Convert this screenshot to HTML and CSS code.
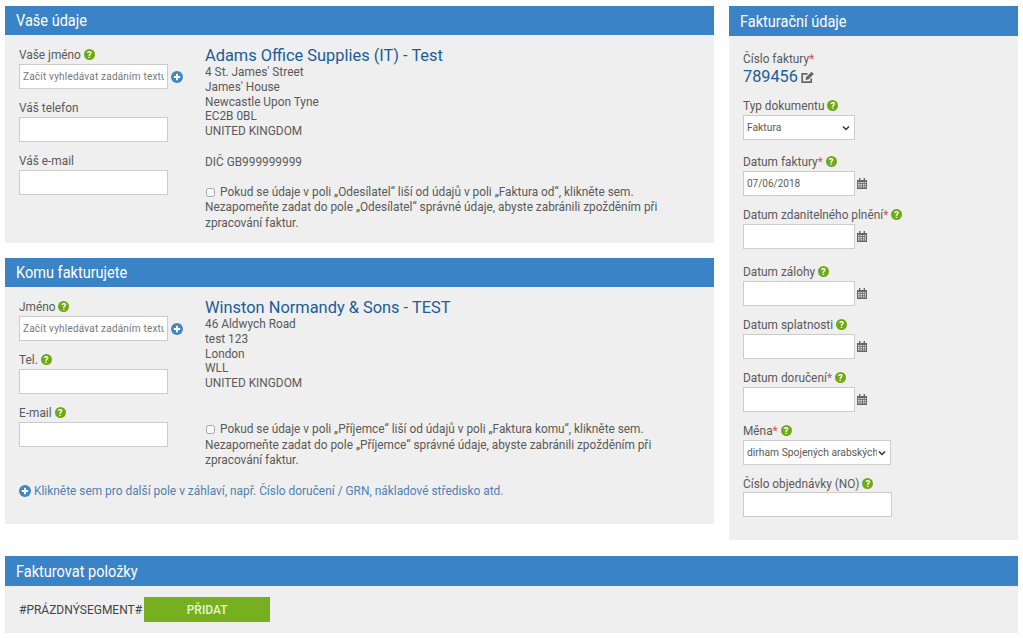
FILE: index.html
```html
<!DOCTYPE html>
<html lang="cs">
<head>
<meta charset="utf-8">
<title>Faktura</title>
<link rel="stylesheet" href="styles.css">
</head>
<body>
<svg class="defs" width="0" height="0" aria-hidden="true">
  <symbol id="plus" viewBox="0 0 12 12"><circle cx="6" cy="6" r="6" fill="#3f87c5"/><path d="M6 2.8v6.4M2.8 6h6.4" stroke="#fff" stroke-width="1.9"/></symbol>
  <symbol id="cal" viewBox="0 0 10 11"><path d="M0 2h10v9H0z" fill="#666"/><path d="M2 0h1.4v2H2zM6.6 0H8v2H6.6z" fill="#666"/><path d="M1 4h1.6v1.3H1zM3.4 4H5v1.3H3.4zM5.8 4h1.6v1.3H5.8zM8 4h1v1.3H8zM1 6.1h1.6v1.3H1zM3.4 6.1H5v1.3H3.4zM5.8 6.1h1.6v1.3H5.8zM8 6.1h1v1.3H8zM1 8.2h1.6v1.3H1zM3.4 8.2H5v1.3H3.4zM5.8 8.2h1.6v1.3H5.8zM8 8.2h1v1.3H8z" fill="#ddd"/></symbol>
</svg>
<main class="page">
  <div class="top">
    <div class="left">
      <section class="panel first">
        <h2 class="head"><span class="title">Vaše údaje</span></h2>
        <div class="body cols">
          <div class="form">
            <div class="field"><label class="lab">Vaše jméno <span class="help">?</span></label>
              <div class="inline"><input class="inp search" placeholder="Začít vyhledávat zadáním textu"><svg class="plus"><use href="#plus"/></svg></div></div>
            <div class="field"><label class="lab">Váš telefon</label><input class="inp"></div>
            <div class="field"><label class="lab">Váš e-mail</label><input class="inp"></div>
          </div>
          <div class="info">
            <h3 class="name">Adams Office Supplies (IT) - Test</h3>
            <p class="addr">4 St. James' Street<br>James' House<br>Newcastle Upon Tyne<br>EC2B 0BL<br>UNITED KINGDOM</p>
            <p class="addr vat">DIČ GB999999999</p>
            <p class="note"><input type="checkbox" class="chk">Pokud se údaje v poli „Odesílatel“ liší od údajů v poli „Faktura od“, klikněte sem.<br>Nezapomeňte zadat do pole „Odesílatel“ správné údaje, abyste zabránili zpožděním při<br>zpracování faktur.</p>
          </div>
        </div>
      </section>
      <section class="panel second">
        <h2 class="head"><span class="title">Komu fakturujete</span></h2>
        <div class="body cols">
          <div class="form">
            <div class="field"><label class="lab">Jméno <span class="help">?</span></label>
              <div class="inline"><input class="inp search" placeholder="Začít vyhledávat zadáním textu"><svg class="plus"><use href="#plus"/></svg></div></div>
            <div class="field"><label class="lab">Tel. <span class="help">?</span></label><input class="inp"></div>
            <div class="field"><label class="lab">E-mail <span class="help">?</span></label><input class="inp"></div>
          </div>
          <div class="info">
            <h3 class="name">Winston Normandy &amp; Sons - TEST</h3>
            <p class="addr">46 Aldwych Road<br>test 123<br>London<br>WLL<br>UNITED KINGDOM</p>
            <p class="addr blank">&nbsp;</p>
            <p class="note"><input type="checkbox" class="chk">Pokud se údaje v poli „Příjemce“ liší od údajů v poli „Faktura komu“, klikněte sem.<br>Nezapomeňte zadat do pole „Příjemce“ správné údaje, abyste zabránili zpožděním při<br>zpracování faktur.</p>
          </div>
        </div>
        <a class="more" href="#"><svg class="plus-s"><use href="#plus"/></svg>Klikněte sem pro další pole v záhlaví, např. Číslo doručení / GRN, nákladové středisko atd.</a>
      </section>
    </div>
    <aside class="panel right">
      <h2 class="head tall"><span class="title">Fakturační údaje</span></h2>
      <div class="side">
        <div class="num-block">
          <label class="lab">Číslo faktury<span class="req">*</span></label>
          <div class="num">789456<svg class="edit" viewBox="0 0 13 13"><path d="M10.200 7.500v3.700H1.200V2.800h5.300" fill="none" stroke="#666" stroke-width="1.700"/><path d="M4.500 9l.6-2.800L10.500.8l2.300 2.300-5.400 5.300z" fill="#666"/></svg></div>
        </div>
        <div class="sf doc"><label class="lab">Typ dokumentu <span class="help">?</span></label>
          <select class="sel"><option>Faktura</option></select></div>
        <div class="sf"><label class="lab">Datum faktury<span class="req">*</span> <span class="help">?</span></label>
          <div class="inline"><input class="inp date" value="07/06/2018"><svg class="cal"><use href="#cal"/></svg></div></div>
        <div class="sf wide-gap"><label class="lab">Datum zdanitelného plnění<span class="req">*</span> <span class="help">?</span></label>
          <div class="inline"><input class="inp date"><svg class="cal"><use href="#cal"/></svg></div></div>
        <div class="sf"><label class="lab">Datum zálohy <span class="help">?</span></label>
          <div class="inline"><input class="inp date"><svg class="cal"><use href="#cal"/></svg></div></div>
        <div class="sf"><label class="lab">Datum splatnosti <span class="help">?</span></label>
          <div class="inline"><input class="inp date"><svg class="cal"><use href="#cal"/></svg></div></div>
        <div class="sf"><label class="lab">Datum doručení<span class="req">*</span> <span class="help">?</span></label>
          <div class="inline"><input class="inp date"><svg class="cal"><use href="#cal"/></svg></div></div>
        <div class="sf"><label class="lab">Měna<span class="req">*</span> <span class="help">?</span></label>
          <select class="sel cur"><option>dirham Spojených arabských emirátů</option></select></div>
        <div class="sf"><label class="lab order-lab">Číslo objednávky (NO) <span class="help">?</span></label>
          <input class="inp order"></div>
      </div>
    </aside>
  </div>
  <section class="panel items">
    <h2 class="head tall"><span class="title">Fakturovat položky</span></h2>
    <div class="item-row"><span class="empty">#PRÁZDNÝSEGMENT#</span><button class="add">PŘIDAT</button></div>
  </section>
</main>
</body>
</html>
```
FILE: styles.css
```css
* { box-sizing: border-box; }
html, body { margin: 0; padding: 0; background: #fff; }
body { font-family: Roboto, "Liberation Sans", sans-serif; font-size: 11.85px; color: #5a5a5a; }
.defs { display: block; height: 0; }
.page { width: 1023px; height: 638px; padding: 6px 5px 0; display: flex; flex-direction: column; gap: 16px; overflow: hidden; }
.top { display: flex; gap: 15px; height: 534px; }
.left { width: 709px; display: flex; flex-direction: column; gap: 15px; }
.panel { background: #efefef; }
.first { height: 237px; }
.second { height: 266px; }
.right { width: 289px; }
.head { margin: 0; height: 29px; line-height: 29px; padding-left: 11px; background: #3a83c6; color: #fff; font-weight: 400; font-size: 17px; }
.title { display: inline-block; transform: scaleX(.855); transform-origin: left center; white-space: nowrap; }
.tall { height: 30px; line-height: 30px; }
.cols { display: flex; padding: 12px 14px 0; }
.form { width: 186px; flex: none; }
.field { height: 53px; }
.lab { display: block; height: 17px; line-height: 16px; font-size: 11.85px; color: #5a5a5a; white-space: nowrap; }
.help { display: inline-block; width: 11px; height: 11px; border-radius: 50%; background: #6fa913; color: #fff; font-size: 9.500px; font-weight: 700; line-height: 11px; text-align: center; vertical-align: 1px; }
.req { color: #d9534f; }
.inp { display: block; width: 149px; height: 25px; border: 1px solid #ccc; background: #fff; padding: 0 3px; font: 10px Roboto, sans-serif; color: #5a5a5a; border-radius: 0; outline: 0; }
.search::placeholder { color: #777; opacity: 1; letter-spacing: .2px; }
.inline { display: flex; align-items: center; }
.plus { width: 12px; height: 12px; margin-left: 3px; }
.info { flex: 1; margin-top: -2px; }
.name { margin: 1px 0 -1px; font-size: 16.4px; font-weight: 400; line-height: 20px; color: #1c5c98; }
.addr { margin: 0; line-height: 14.75px; color: #5a5a5a; font-size: 11.85px; }
.vat { margin-top: 16px; }
.blank { line-height: 16.5px; }
.note { margin: 15px 0 0; line-height: 15.500px; font-size: 11.85px; color: #5a5a5a; white-space: nowrap; }
.chk { width: 9px; height: 9px; margin: 0 5px 0 1px; vertical-align: -1px; opacity: .6; }
.more { display: flex; align-items: center; margin: 15px 0 0 14px; color: #4d82b5; text-decoration: none; font-size: 11.9px; line-height: 15px; }
.plus-s { width: 12px; height: 12px; margin-right: 3px; }
.side { padding: 15px 14px 0; }
.num-block { height: 47px; }
.num-block .lab { height: 16px; }
.num { display: flex; align-items: center; font-size: 16.3px; line-height: 20px; color: #1c5c98; }
.edit { width: 13px; height: 13px; margin-left: 3px; }
.sf { height: 53px; }
.doc { height: 56px; }
.wide-gap { height: 57px; }
.sel { display: block; appearance: none; width: 112px; height: 25px; border: 1px solid #ccc; font: 10.3px Roboto, sans-serif; color: #5a5a5a; border-radius: 0; padding: 0 13px 0 3px; background: #fff url("data:image/svg+xml,%3Csvg xmlns='http://www.w3.org/2000/svg' width='8' height='6'%3E%3Cpath d='M1 1.500l3 3 3-3' fill='none' stroke='%23333' stroke-width='1.500'/%3E%3C/svg%3E") no-repeat right 4px center; }
.cur { width: 148px; }
.date { width: 112px; }
.order { width: 149px; }
.order-lab { height: 16px; }
.cal { width: 10px; height: 11px; margin-left: 2px; }
.items { height: 77px; }
.item-row { display: flex; align-items: center; padding: 11px 14px 0; }
.empty { color: #444; font-size: 12px; }
.add { width: 126px; height: 25px; margin-left: 2px; border: 0; background: #76b021; color: #e9f3d6; font: 500 12px Roboto, sans-serif; }
```
